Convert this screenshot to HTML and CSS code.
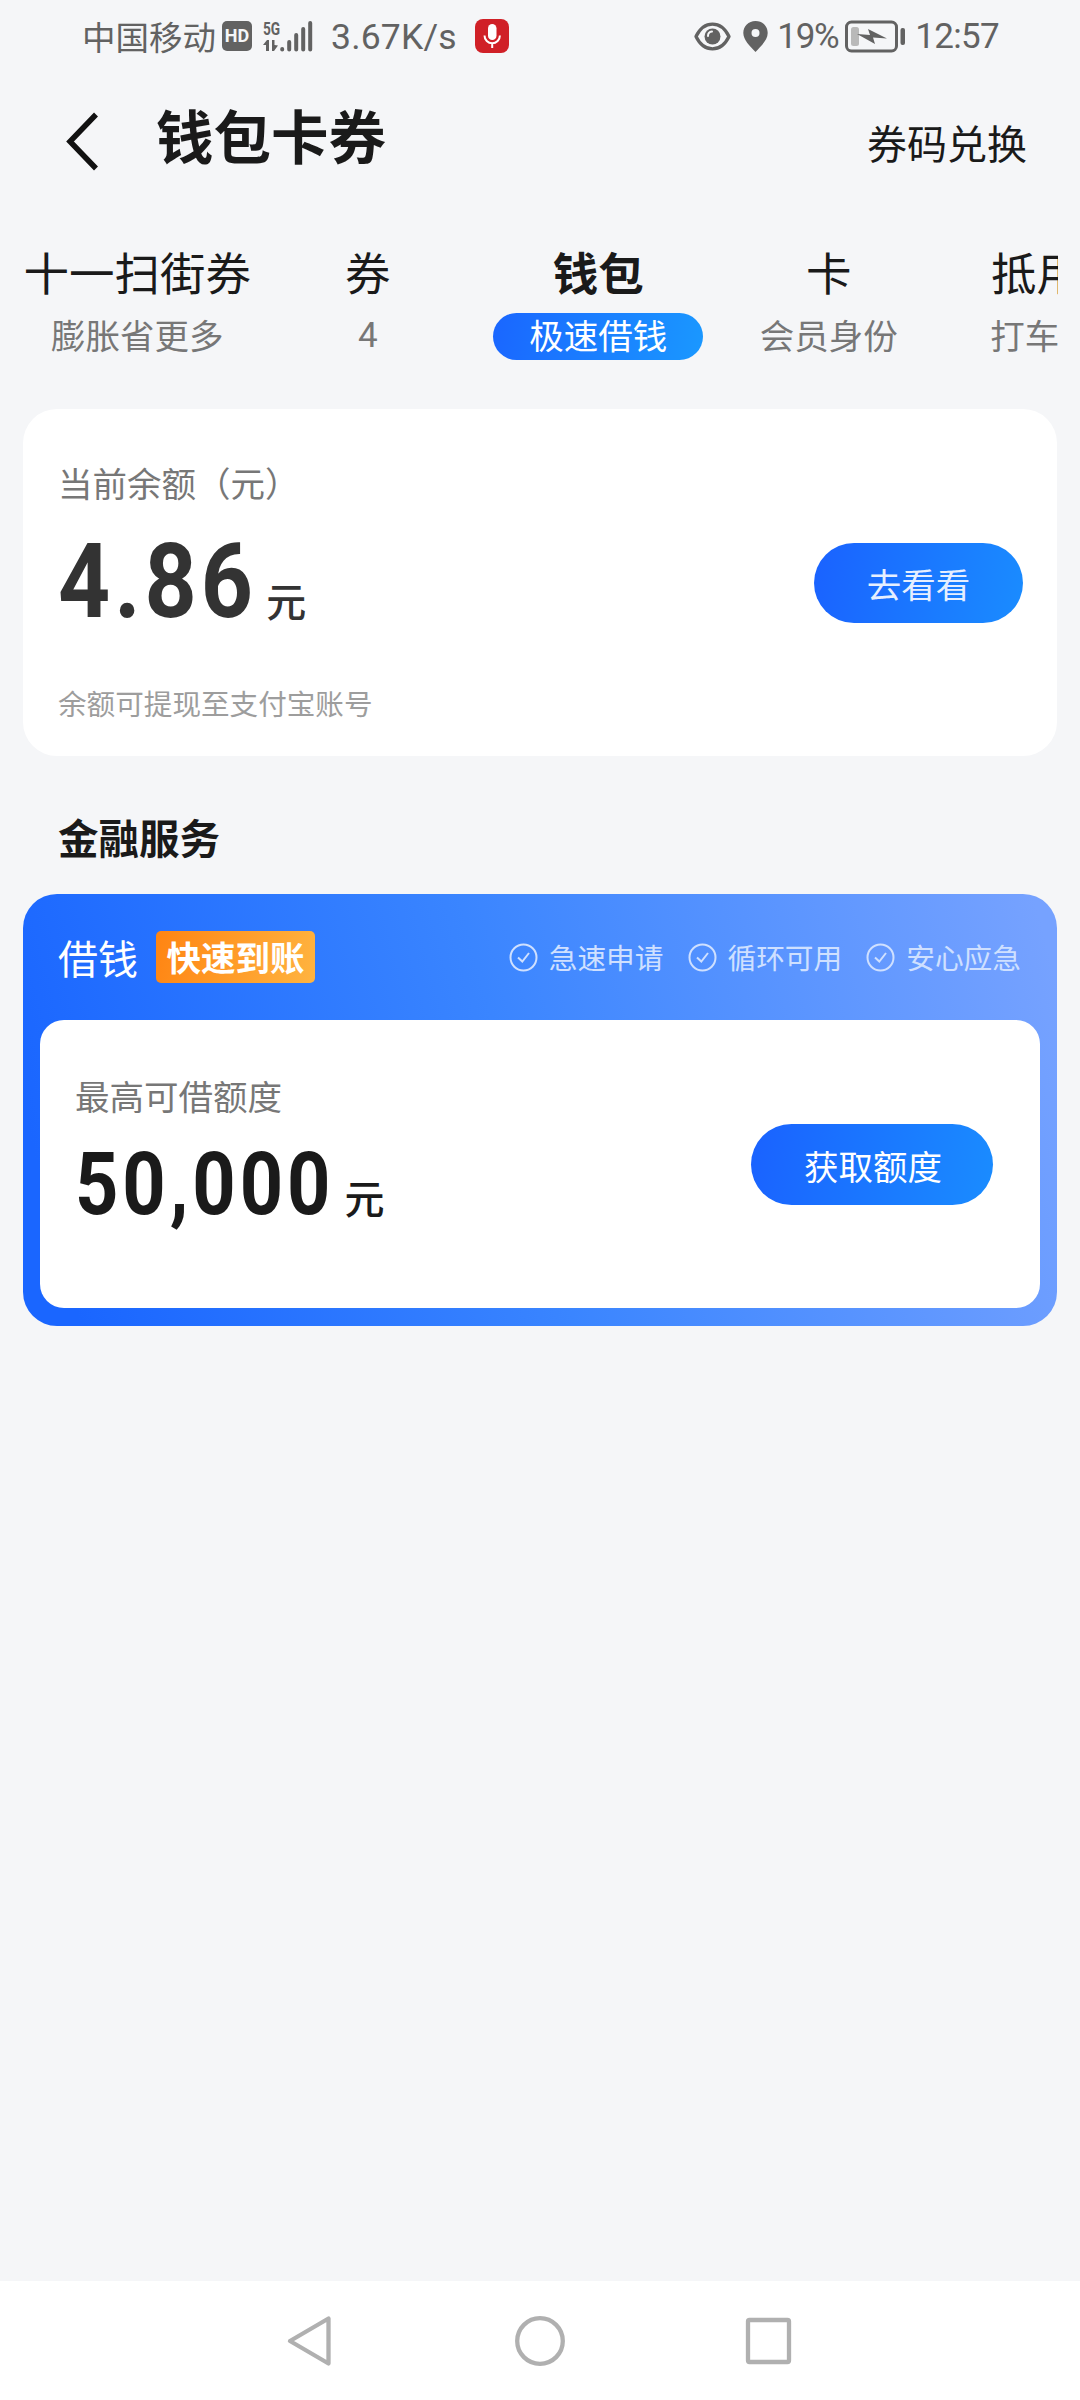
FILE: index.html
```html
<!DOCTYPE html>
<html lang="zh-CN">
<head>
<meta charset="utf-8">
<title>钱包卡券</title>
<link rel="stylesheet" href="styles.css">
</head>
<body>
<div class="screen">
  <div class="status">
    <span class="carrier">中国移动</span>
    <span class="hd">HD</span>
    <span class="signal">
      <span class="net">
        <span class="gen">5G</span>
        <svg class="arrows" width="15" height="11" viewBox="0 0 15 11"><path d="M0 5L4 0H6V11H3V5ZM9 0H11.500V5L15 5.500L11 11H9Z" fill="#626262"/></svg>
      </span>
      <svg width="33" height="31" viewBox="0 0 33 31" stroke="#626262" stroke-width="4" stroke-linecap="round"><path d="M2.200 28V28.600M9.200 21V28.600M16.200 14V28.600M23.200 8V28.600M30.200 2V28.600"/></svg>
    </span>
    <span class="speed">3.67K/s</span>
    <svg class="mic" width="34" height="34" viewBox="0 0 34 34"><rect width="34" height="34" rx="8" fill="#d02027"/><rect x="13" y="5" width="8.500" height="16" rx="4.250" fill="#fff"/><path d="M9.500 16.500a7.700 7.700 0 0 0 15.400 0M17.200 24.500V29" fill="none" stroke="#fff" stroke-width="2"/></svg>
    <span class="right">
      <svg class="eye" width="37" height="29" viewBox="0 0 37 29"><path d="M2 14.500C10 -2 27 -2 35 14.500C27 31 10 31 2 14.500Z" fill="none" stroke="#626262" stroke-width="3.300" stroke-linejoin="round"/><circle cx="18.500" cy="14.500" r="8" fill="#626262"/><path d="M14 14a4.500 4.500 0 0 1 4-4.500" fill="none" stroke="#f5f6f8" stroke-width="2" stroke-linecap="round"/></svg>
      <svg class="pin" width="25" height="31" viewBox="0 0 25 31"><path fill-rule="evenodd" d="M12.500 0C5.500 0 .3 5.200 .3 12c0 7 6.700 13 12.200 19C18 25 24.700 19 24.700 12C24.700 5.200 19.500 0 12.500 0ZM12.500 8a4 4 0 1 1 0 8a4 4 0 0 1 0-8Z" fill="#626262"/></svg>
      <span class="pct">19%</span>
      <svg class="battery" width="61" height="33" viewBox="0 0 61 33"><rect x="1.500" y="2" width="50" height="29" rx="5" fill="none" stroke="#626262" stroke-width="3"/><rect x="6" y="7" width="8" height="19" rx="2.500" fill="#b9b9b9"/><path d="M12 14L25 15L23 9L42 18.500L28 17.500L30 24Z" fill="#626262"/><rect x="55.500" y="8" width="4.500" height="17" rx="2" fill="#626262"/></svg>
      <span class="time">12:57</span>
    </span>
  </div>

  <header class="header">
    <svg class="back" width="36" height="60" viewBox="0 0 36 60"><path d="M31 3.500L5 30.500L31 57.500" fill="none" stroke="#111" stroke-width="5.500"/></svg>
    <h1 class="title">钱包卡券</h1>
    <span class="redeem">券码兑换</span>
  </header>

  <nav class="tabs">
    <div class="tab"><span class="name">十一扫街券</span><span class="sub">膨胀省更多</span></div>
    <div class="tab"><span class="name">券</span><span class="sub count">4</span></div>
    <div class="tab active"><span class="name">钱包</span><span class="sub">极速借钱</span></div>
    <div class="tab"><span class="name">卡</span><span class="sub">会员身份</span></div>
    <div class="tab"><span class="name">抵用券</span><span class="sub">打车可用</span></div>
  </nav>

  <section class="balance">
    <div>
      <div class="label">当前余额（元）</div>
      <div class="amount"><span class="num">4.86</span><span class="unit">元</span></div>
      <div class="note">余额可提现至支付宝账号</div>
    </div>
    <button class="btn look">去看看</button>
  </section>

  <h2 class="section-title">金融服务</h2>

  <section class="loan">
    <div class="loan-head">
      <span class="loan-name">借钱</span>
      <span class="badge">快速到账</span>
      <ul class="features">
        <li><svg class="check" width="29" height="29" viewBox="0 0 29 29"><circle cx="14.500" cy="14.500" r="13"/><path d="M9 14.500L13.300 18.500L20 10"/></svg>急速申请</li>
        <li><svg class="check" width="29" height="29" viewBox="0 0 29 29"><circle cx="14.500" cy="14.500" r="13"/><path d="M9 14.500L13.300 18.500L20 10"/></svg>循环可用</li>
        <li><svg class="check" width="29" height="29" viewBox="0 0 29 29"><circle cx="14.500" cy="14.500" r="13"/><path d="M9 14.500L13.300 18.500L20 10"/></svg>安心应急</li>
      </ul>
    </div>
    <div class="loan-body">
      <div>
        <div class="label">最高可借额度</div>
        <div class="amount"><span class="num">50,000</span><span class="unit">元</span></div>
      </div>
      <button class="btn quota">获取额度</button>
    </div>
  </section>

  <footer class="navbar">
    <svg width="50" height="56" viewBox="0 0 50 56"><path d="M42.500 5.500V50.500L4 28Z"/></svg>
    <svg width="50" height="56" viewBox="0 0 50 56"><circle cx="25" cy="28" r="22.800"/></svg>
    <svg width="50" height="56" viewBox="0 0 50 56"><rect x="4" y="7" width="41" height="42" rx="1.500"/></svg>
  </footer>
</div>
</body>
</html>
```
FILE: styles.css
```css
* { box-sizing: border-box; margin: 0; padding: 0; }

body {
  background: #f5f6f8;
  font-family: "Noto Sans CJK SC", sans-serif;
  color: #1a1a1a;
}

svg { display: block; flex: none; }

.screen {
  width: 1080px;
  height: 2400px;
  display: flex;
  flex-direction: column;
  overflow: hidden;
  white-space: nowrap;
}

/* Status bar */
.status {
  height: 72px;
  display: flex;
  align-items: center;
  padding: 0 81px 0 82px;
  color: #626262;
}
.carrier { width: 140px; font-size: 33.5px; line-height: 68px; }
.hd {
  width: 30px;
  height: 30px;
  border-radius: 5px;
  background: #626262;
  color: #f5f6f8;
  font: bold 18px/30px Roboto, sans-serif;
  text-align: center;
}
.signal { display: flex; align-items: center; margin-left: 11px; }
.net { width: 17px; height: 30px; display: flex; flex-direction: column; justify-content: space-between; }
.gen { font: bold 19px/15px Roboto, sans-serif; transform: scaleX(.72); transform-origin: 0 0; }
.speed { width: 144px; margin-left: 18px; font: 35.5px/74px Roboto, sans-serif; letter-spacing: .2px; padding-top: 2px; }
.right { display: flex; align-items: center; margin-left: auto; font: 35px/76px Roboto, sans-serif; }
.pin { margin-left: 12px; }
.pct { width: 68px; margin-left: 9px; letter-spacing: -1.3px; padding-top: 2px; }
.time { margin-left: 9px; letter-spacing: -.7px; padding-top: 2px; }

/* Page header */
.header {
  height: 141px;
  display: flex;
  align-items: center;
  padding: 0 53px 4px 65px;
}
.title { margin-left: 55px; font-size: 57.5px; line-height: 124px; font-weight: 700; padding-bottom: 13px; }
.redeem { margin-left: auto; padding-top: 2px; font-size: 40px; line-height: 80px; }

/* Tabs */
.tabs {
  display: grid;
  grid-template-columns: repeat(5, 230.5px);
  margin: 22px 22px 0 22px;
  height: 174px;
  overflow: hidden;
}
.tab { display: flex; flex-direction: column; align-items: center; }
.name { height: 78px; font-size: 45.5px; line-height: 72px; }
.sub { height: 47px; font-size: 34.5px; line-height: 43px; color: #777; }
.count { font: 35px/46px Roboto, sans-serif; }
.active .name { font-weight: 700; }
.active .sub {
  padding: 0 36px;
  border-radius: 24px;
  background: linear-gradient(100deg, #1a66ff, #1a98ff);
  color: #fff;
}

/* Cards */
.label { font-size: 34.5px; line-height: 50px; color: #777; }
.amount { display: flex; align-items: baseline; }
.num {
  font-family: Roboto, sans-serif;
  font-weight: 700;
  letter-spacing: 4.5px;
  transform: scaleX(.875);
  transform-origin: 0 50%;
}
.unit { font-size: 40px; font-weight: 500; line-height: 50px; }
.btn {
  border: 0;
  border-radius: 41px;
  background: linear-gradient(100deg, #1a62ff, #1a8cff);
  color: #fff;
  font: 34.500px/78px "Noto Sans CJK SC", sans-serif;
}

.balance {
  display: flex;
  justify-content: space-between;
  height: 347px;
  margin: 0 23px;
  padding: 48px 34px 0 35px;
  border-radius: 34px;
  background: #fff;
}
.balance .amount { height: 176px; padding-top: 5px; color: #333; }
.balance .num { font-size: 104px; line-height: 140px; }
.balance .unit { margin-left: -19px; }
.note { font-size: 28.600px; line-height: 40px; color: #9d9d9d; }
.look { width: 209px; height: 80px; margin-top: 86px; line-height: 80px; color: #e6efff; }

.section-title { margin: 53px 0 0 58px; height: 85px; font-size: 40.500px; line-height: 56px; font-weight: 700; }

.loan {
  height: 432px;
  margin: 0 23px;
  padding: 0 17px 18px;
  border-radius: 34px;
  background: linear-gradient(75deg, #1a66ff 5%, #3a85ff 48%, #76a2ff 98%);
}
.loan-head { height: 126px; display: flex; align-items: center; padding: 0 19px 0 18px; color: #fff; }
.loan-name { font-size: 40px; line-height: 60px; }
.badge {
  width: 159px;
  height: 52px;
  margin-left: 18px;
  border-radius: 5px;
  background: linear-gradient(105deg, #ff8412, #ffb440);
  font-size: 34.500px;
  line-height: 50px;
  font-weight: 700;
  text-align: center;
}
.features { display: flex; gap: 24px; margin-left: auto; list-style: none; font-size: 28.700px; line-height: 56px; color: #cfe0ff; }
.features li { display: flex; align-items: center; gap: 11px; }
.check { fill: none; stroke: #cfe0ff; stroke-width: 2; }
.loan-body {
  height: 288px;
  display: flex;
  justify-content: space-between;
  padding: 50px 47px 0 35px;
  border-radius: 24px;
  background: #fff;
}
.loan .num { font-size: 86.500px; line-height: 130px; }
.loan .unit { margin-left: -27px; }
.quota { width: 242px; height: 81px; margin-top: 54px; padding-left: 2px; }

/* System navigation */
.navbar {
  height: 119px;
  margin-top: auto;
  display: flex;
  justify-content: center;
  align-items: center;
  gap: 179px;
  background: #fff;
}
.navbar svg { fill: none; stroke: #b0b0b0; stroke-width: 4.300; stroke-linejoin: round; }
```
